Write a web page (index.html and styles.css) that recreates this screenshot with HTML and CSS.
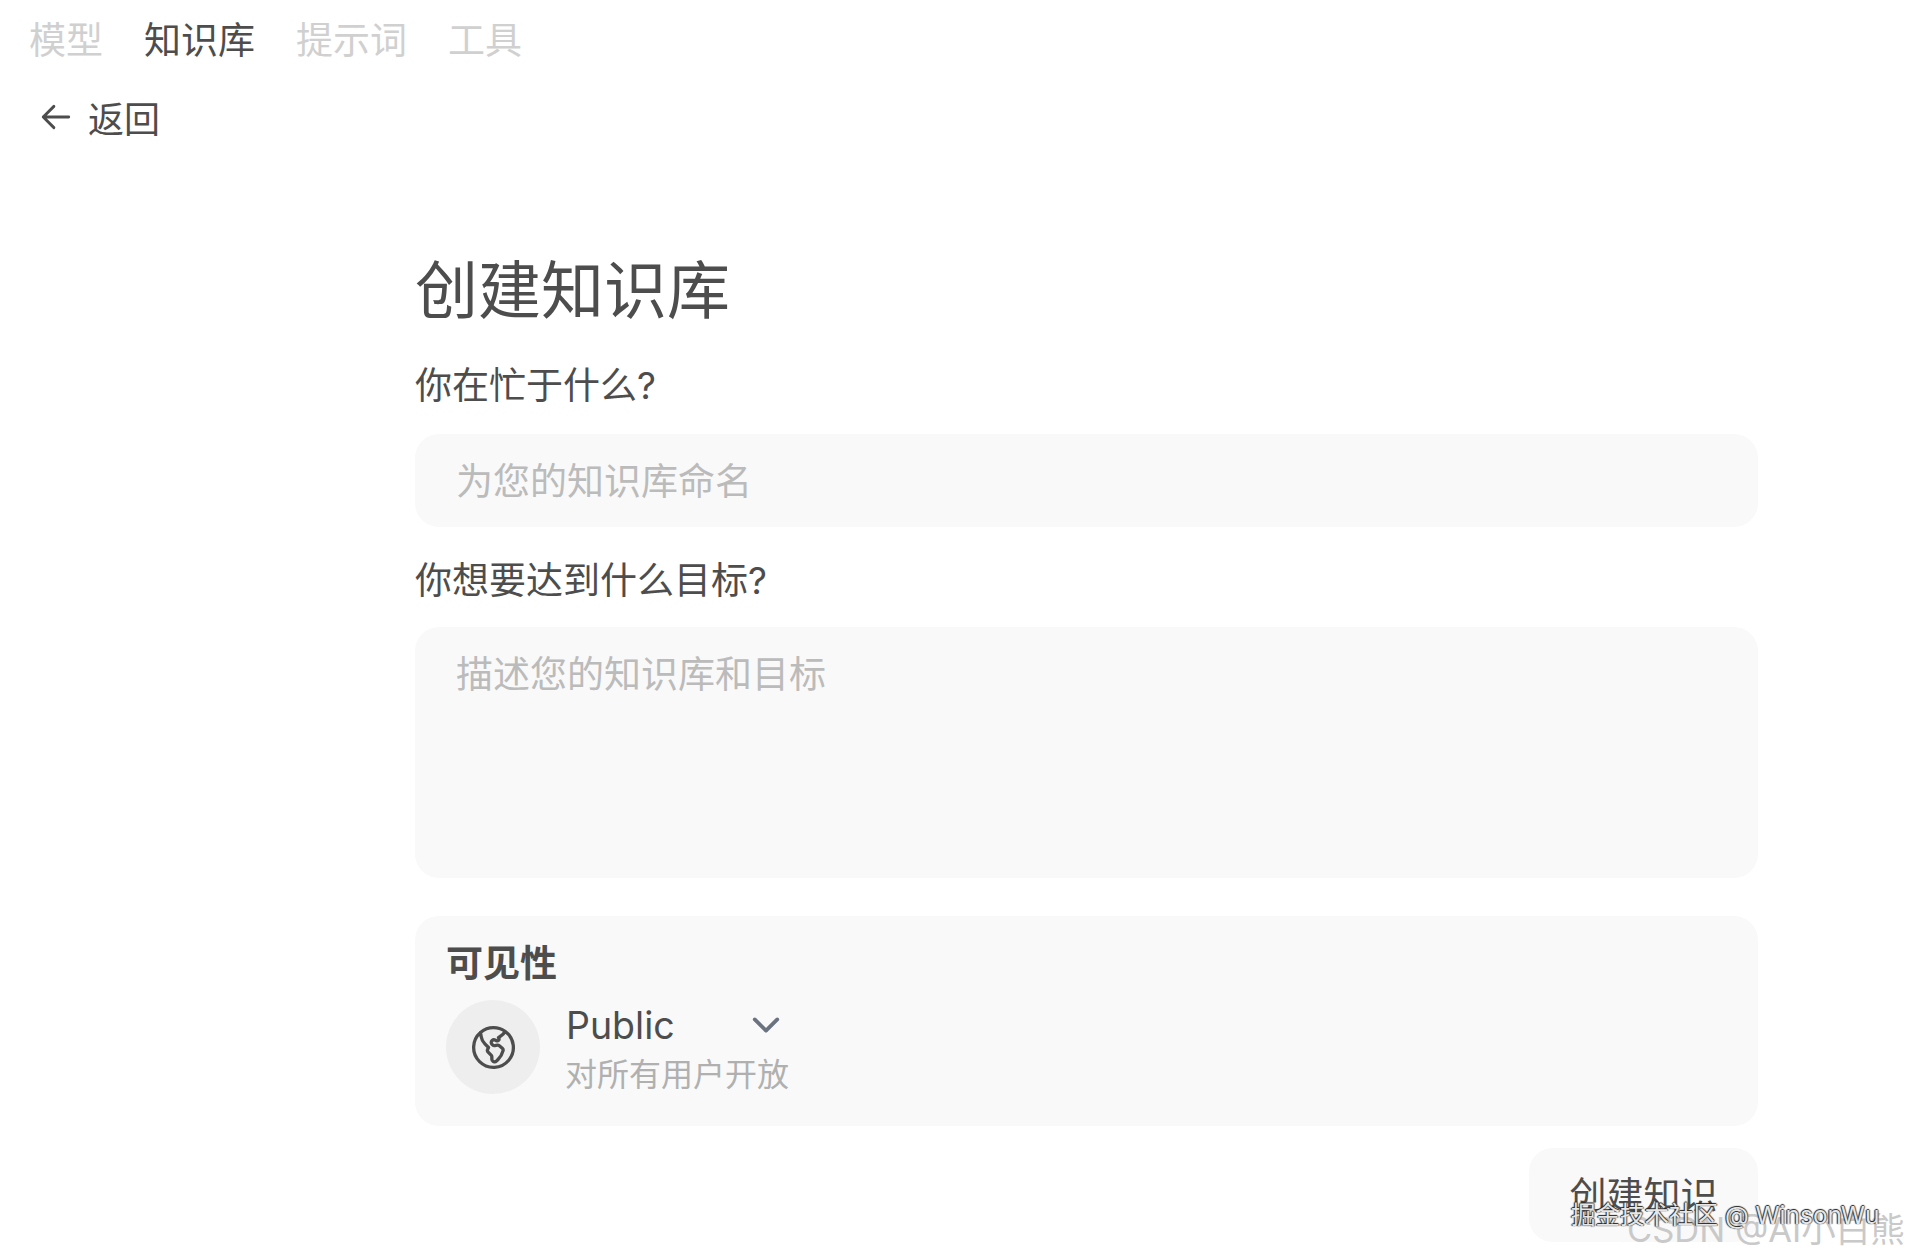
FILE: index.html
```html
<!DOCTYPE html>
<html lang="zh-CN">
<head>
    <meta charset="UTF-8">
    <meta name="viewport" content="width=device-width, initial-scale=1.0">
    <title>创建知识库</title>
    <link rel="stylesheet" href="styles.css">
</head>
<body>
    <nav class="tabs">
        <a href="#" class="tab">模型</a>
        <a href="#" class="tab tab-active">知识库</a>
        <a href="#" class="tab">提示词</a>
        <a href="#" class="tab">工具</a>
    </nav>

    <a href="#" class="back">
        <svg class="back-icon" viewBox="0 0 24 24" fill="none" stroke="currentColor" stroke-width="2" stroke-linecap="round" stroke-linejoin="round">
            <path d="M10.5 19.5L3 12m0 0l7.5-7.5M3 12h18"/>
        </svg>
        <span>返回</span>
    </a>

    <form class="form">
        <h1 class="title">创建知识库</h1>

        <label class="label" for="kb-name">你在忙于什么?</label>
        <input class="field field-name" id="kb-name" type="text" placeholder="为您的知识库命名">

        <label class="label label-goal" for="kb-goal">你想要达到什么目标?</label>
        <textarea class="field field-goal" id="kb-goal" placeholder="描述您的知识库和目标"></textarea>

        <section class="card">
            <h2 class="card-title">可见性</h2>
            <div class="access">
                <div class="access-badge">
                    <svg class="globe" viewBox="0 0 24 24" fill="none" stroke="currentColor" stroke-width="1.5" stroke-linecap="round" stroke-linejoin="round">
                        <path d="M6.115 5.19l.319 1.913A6 6 0 008.11 10.36L9.75 12l-.387.775c-.217.433-.132.956.21 1.298l1.348 1.348c.21.21.329.497.329.795v1.089c0 .426.24.815.622 1.006l.153.076c.433.217.956.132 1.298-.21l.723-.723a8.7 8.7 0 002.288-4.042 1.087 1.087 0 00-.358-1.099l-1.33-1.108c-.251-.21-.582-.299-.905-.245l-1.17.195a1.125 1.125 0 01-.98-.314l-.295-.295a1.125 1.125 0 010-1.591l.13-.132a1.125 1.125 0 011.3-.21l.603.302a.809.809 0 001.086-1.086L14.25 7.5l1.256-.837a4.5 4.5 0 001.528-1.732l.146-.292M6.115 5.19A9 9 0 1017.18 4.64M6.115 5.19A8.965 8.965 0 0112 3c1.929 0 3.716.607 5.18 1.64"/>
                    </svg>
                </div>
                <div class="access-text">
                    <div class="access-select">
                        <span>Public</span>
                        <svg class="chevron" viewBox="0 0 24 24" fill="none" stroke="currentColor" stroke-width="2.5" stroke-linecap="round" stroke-linejoin="round">
                            <path d="M19.5 8.25l-7.5 7.5-7.5-7.5"/>
                        </svg>
                    </div>
                    <div class="access-note">对所有用户开放</div>
                </div>
            </div>
        </section>

        <div class="actions">
            <button class="submit" type="button">创建知识</button>
        </div>
    </form>

    <!-- watermarks sit on top of the screenshot -->
    <div class="mark mark-juejin">掘金技术社区 @ WinsonWu</div>
    <div class="mark mark-csdn">CSDN @AI小白熊</div>
</body>
</html>
```

FILE: styles.css
```css
html, body {
    margin: 0;
    padding: 0;
    height: 1260px;
    overflow: hidden;
}

body {
    position: relative;
    background: #ffffff;
    color: #4d4d4d;
    font-family: Inter, "Noto Sans CJK SC", sans-serif;
}

a {
    color: inherit;
    text-decoration: none;
}

.tabs {
    display: flex;
    align-items: center;
    gap: 41px;
    height: 75px;
    padding-left: 29px;
}

.tab {
    color: #d0d0d0;
    font-size: 37px;
}

.tab-active {
    color: #4d4d4d;
}

.back {
    display: flex;
    align-items: center;
    gap: 15px;
    height: 83px;
    padding-left: 39px;
    font-size: 36px;
}

.back-icon {
    width: 34px;
    height: 34px;
}

.form {
    width: 1343px;
    margin: 88px 0 0 415px;
}

.title {
    margin: 0 0 27px;
    font-size: 63px;
    font-weight: 400;
    line-height: 88px;
}

.label {
    display: block;
    margin-bottom: 23px;
    font-size: 37px;
    line-height: 50px;
}

.label-goal {
    margin-top: 29px;
    margin-bottom: 21px;
}

.field {
    display: block;
    box-sizing: border-box;
    width: 100%;
    padding: 0 41px;
    border: none;
    border-radius: 24px;
    outline: none;
    background: #f9f9f9;
    color: #4d4d4d;
    font-family: inherit;
    font-size: 37px;
    resize: none;
}

.field::placeholder {
    color: #bbbbbb;
    opacity: 1;
}

.field-name {
    height: 93px;
    padding-top: 2px;
}

.field-goal {
    height: 251px;
    padding-top: 23px;
    line-height: 50px;
}

.card {
    box-sizing: border-box;
    height: 210px;
    margin-top: 38px;
    padding: 23px 31px 30px;
    border-radius: 24px;
    background: #f9f9f9;
}

.card-title {
    margin: 0 0 11px;
    font-size: 37px;
    font-weight: 700;
    line-height: 50px;
}

.access {
    display: flex;
    align-items: flex-start;
    gap: 25px;
}

.access-badge {
    display: flex;
    align-items: center;
    justify-content: center;
    width: 94px;
    height: 94px;
    border-radius: 50%;
    background: #eeeeee;
}

.globe {
    width: 53px;
    height: 53px;
}

.access-text {
    display: flex;
    flex-direction: column;
    gap: 3px;
    padding-top: 1px;
}

.access-select {
    display: flex;
    align-items: center;
    justify-content: space-between;
    height: 48px;
    padding: 0 5px 0 1px;
    font-size: 37.5px;
}

.chevron {
    width: 36px;
    height: 36px;
    color: #6b7280;
}

.access-note {
    color: #b0b0b0;
    font-size: 32px;
    line-height: 46px;
}

.actions {
    display: flex;
    justify-content: flex-end;
    margin-top: 22px;
}

.submit {
    width: 229px;
    height: 94px;
    padding: 0 0 4px;
    border: none;
    border-radius: 24px;
    background: #f9f9f9;
    color: #4d4d4d;
    font-family: inherit;
    font-size: 37px;
    white-space: nowrap;
}

.mark {
    position: absolute;
    white-space: nowrap;
}

.mark-juejin {
    top: 1199px;
    left: 1571px;
    color: #e6e6e6;
    font-size: 24.5px;
    line-height: 32px;
    text-shadow: -1px 0 1px #222222, 0 -1px 1px #222222, 1px 0 1px #666666;
    z-index: 2;
}

.mark-csdn {
    top: 1206px;
    left: 1627px;
    color: #c9c9c9;
    font-size: 34.5px;
    line-height: 48px;
}
```
